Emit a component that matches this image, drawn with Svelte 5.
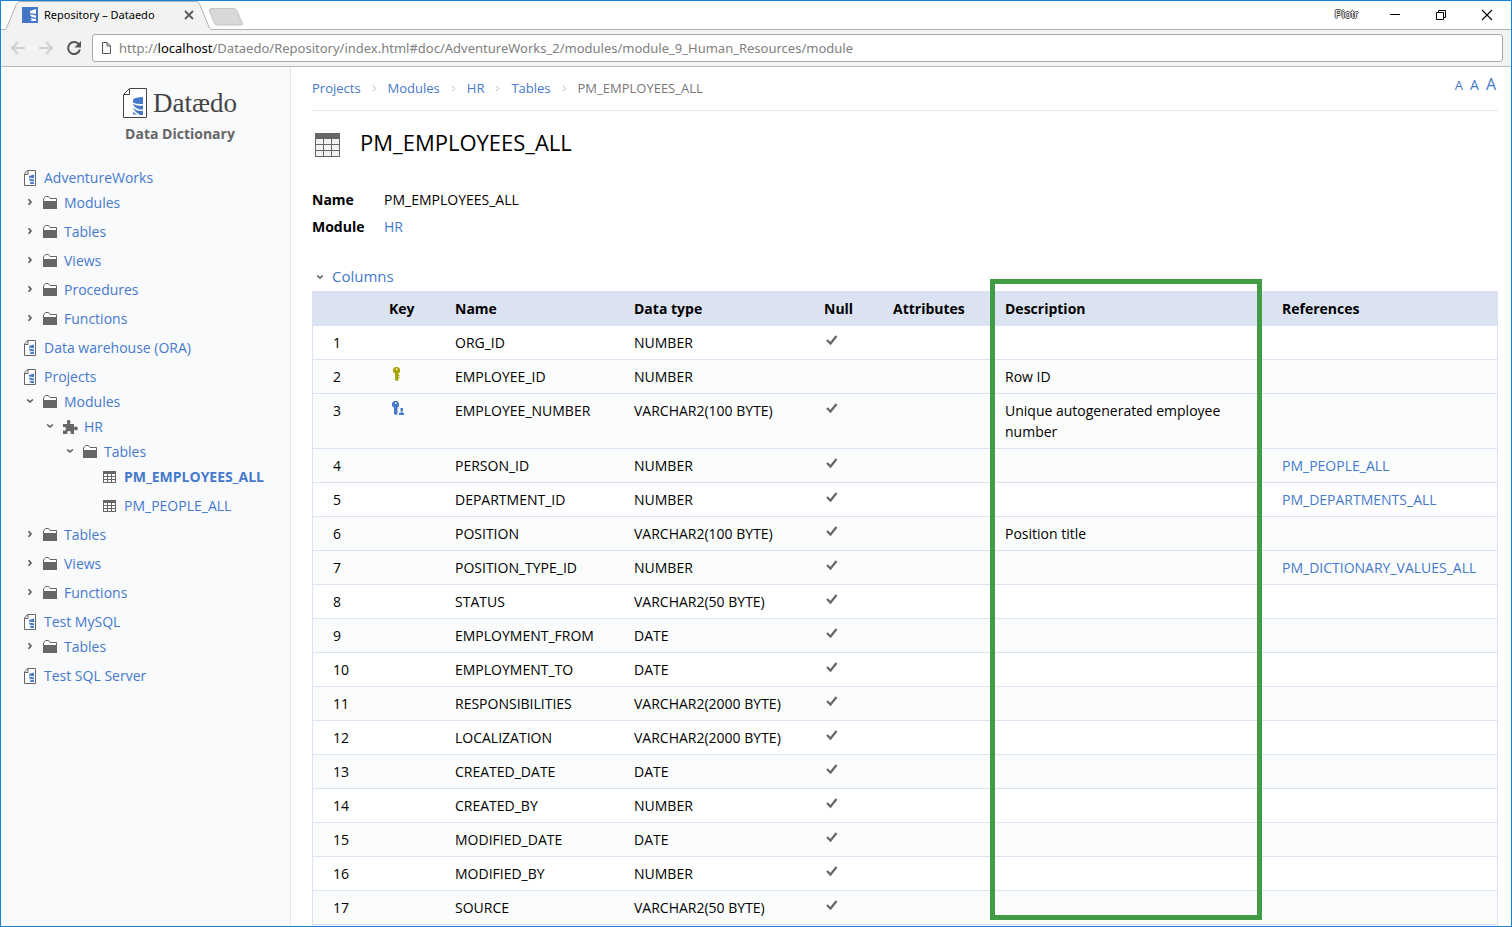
<!-- Dataedo repository viewer -->
<script>
  const url = { scheme: 'http://', host: 'localhost', path: '/Dataedo/Repository/index.html#doc/AdventureWorks_2/modules/module_9_Human_Resources/module' };

  const folder = (label, children) => ({ icon: 'folder', label, children });

  let tree = $state([
    { icon: 'doc', label: 'AdventureWorks', open: true, children: [
      folder('Modules'), folder('Tables'), folder('Views'), folder('Procedures'), folder('Functions')
    ] },
    { icon: 'doc', label: 'Data warehouse (ORA)' },
    { icon: 'doc', label: 'Projects', open: true, children: [
      { icon: 'folder', label: 'Modules', open: true, children: [
        { icon: 'puzzle', label: 'HR', open: true, children: [
          { icon: 'folder', label: 'Tables', open: true, children: [
            { icon: 'table', label: 'PM_EMPLOYEES_ALL', active: true },
            { icon: 'table', label: 'PM_PEOPLE_ALL' }
          ] }
        ] }
      ] },
      folder('Tables'), folder('Views'), folder('Functions')
    ] },
    { icon: 'doc', label: 'Test MySQL', open: true, children: [folder('Tables')] },
    { icon: 'doc', label: 'Test SQL Server' }
  ]);

  const crumbs = ['Projects', 'Modules', 'HR', 'Tables'];

  const columns = [
    { name: 'ORG_ID', type: 'NUMBER', nullable: true },
    { name: 'EMPLOYEE_ID', type: 'NUMBER', key: 'primary', description: 'Row ID' },
    { name: 'EMPLOYEE_NUMBER', type: 'VARCHAR2(100 BYTE)', key: 'unique', nullable: true, description: 'Unique autogenerated employee number' },
    { name: 'PERSON_ID', type: 'NUMBER', nullable: true, ref: 'PM_PEOPLE_ALL' },
    { name: 'DEPARTMENT_ID', type: 'NUMBER', nullable: true, ref: 'PM_DEPARTMENTS_ALL' },
    { name: 'POSITION', type: 'VARCHAR2(100 BYTE)', nullable: true, description: 'Position title' },
    { name: 'POSITION_TYPE_ID', type: 'NUMBER', nullable: true, ref: 'PM_DICTIONARY_VALUES_ALL' },
    { name: 'STATUS', type: 'VARCHAR2(50 BYTE)', nullable: true },
    { name: 'EMPLOYMENT_FROM', type: 'DATE', nullable: true },
    { name: 'EMPLOYMENT_TO', type: 'DATE', nullable: true },
    { name: 'RESPONSIBILITIES', type: 'VARCHAR2(2000 BYTE)', nullable: true },
    { name: 'LOCALIZATION', type: 'VARCHAR2(2000 BYTE)', nullable: true },
    { name: 'CREATED_DATE', type: 'DATE', nullable: true },
    { name: 'CREATED_BY', type: 'NUMBER', nullable: true },
    { name: 'MODIFIED_DATE', type: 'DATE', nullable: true },
    { name: 'MODIFIED_BY', type: 'NUMBER', nullable: true },
    { name: 'SOURCE', type: 'VARCHAR2(50 BYTE)', nullable: true }
  ];

  // row numbers left on a white background
  const plainRows = [1, 5, 8, 10, 12, 14, 16];

  let showColumns = $state(true);
</script>

{#snippet chevron(open)}
  <svg class="chevron" class:open width="8" height="8" viewBox="0 0 8 8">
    <path d="M2.5 1.2L5 4L2.5 6.8" fill="none" stroke="#555" stroke-width="1.6" />
  </svg>
{/snippet}

{#snippet icon(type)}
  {#if type === 'doc'}
    <svg width="12" height="16" viewBox="0 0 12 16">
      <path d="M3.5 .5H11.5V15.5H.5V4z" fill="#fff" stroke="#666" />
      <path d="M.5 4.5H4V.5" fill="none" stroke="#666" />
      <path d="M5 6L10 4.500V8.300L5 7.500zM5 8.500L10 9.500V11.500L5.500 10.500zM5.500 11.500L10 12.300V14H5L7 13z" fill="#4679cc" />
    </svg>
  {:else if type === 'folder'}
    <svg width="14" height="13" viewBox="0 0 14 13">
      <path d="M.5 12V3L2.5 .5H5.5L7 2.500H13.5V12" fill="#fff" stroke="#666" />
      <path d="M0 5H14V13H0z" fill="#666" />
    </svg>
  {:else if type === 'puzzle'}
    <svg width="15" height="14" viewBox="0 0 15 14">
      <path d="M0 4H4.600C3.200 2 4 0 5.700 0S8.200 2 6.800 4H11V7.400C12.500 6 14.800 6.500 14.800 8.500S12.500 11 11 9.600V14H7.500C8.500 12 7.500 11 6 11S3.500 12 4.500 14H0V10.300C2 11.300 3 10 3 8.800S2 6.300 0 7.300z" fill="#666" />
    </svg>
  {:else if type === 'table'}
    <svg width="13" height="12" viewBox="0 0 13 12">
      <path d="M0 0H13V12H0z" fill="#666" />
      <path d="M1 3h3v2H1zM5 3h3v2H5zM9 3h3v2H9zM1 6h3v2H1zM5 6h3v2H5zM9 6h3v2H9zM1 9h3v2H1zM5 9h3v2H5zM9 9h3v2H9z" fill="#fff" />
    </svg>
  {/if}
{/snippet}

{#snippet branch(nodes, root)}
  <ul class:root>
    {#each nodes as node}
      <li>
        <div class="node">
          {#if !root}
            <span class="caret">
              {#if node.icon !== 'table'}
                <button aria-label="Toggle {node.label}" onclick={() => (node.open = !node.open)}>{@render chevron(node.open)}</button>
              {/if}
            </span>
          {/if}
          <a href="#{node.label}" class:active={node.active}>
            <span class="node-icon {node.icon}">{@render icon(node.icon)}</span>{node.label}
          </a>
        </div>
        {#if node.open && node.children}
          {@render branch(node.children, false)}
        {/if}
      </li>
    {/each}
  </ul>
{/snippet}

<div class="window">
  <header class="tabstrip">
    <svg class="tab-shape" width="245" height="29" viewBox="0 0 245 29">
      <path d="M0 28.5H3C5 28.5 5.5 27.5 6 26L15 4C16 1.5 17 .5 19 .5H195C197 .5 198 1.5 199 4L208 26C209 28 210 28.5 212 28.5H245V29H0z" fill="#f2f2f2" />
      <path d="M0 28.5H3C5 28.5 5.5 27.5 6 26L15 4C16 1.5 17 .5 19 .5H195C197 .5 198 1.5 199 4L208 26C209 28 210 28.5 212 28.5H245" fill="none" stroke="#b3b3b3" />
      <path d="M211 7.5H232C234 7.5 235 8 236 10L241 21C242 23 241.5 24 240 24H217C215 24 214 23.5 213 21.5L208.5 10C208 8.5 209 7.5 211 7.5z" fill="#d8d8d8" stroke="#c4c4c4" />
    </svg>
    <div class="tab">
      <svg width="16" height="16" viewBox="0 0 16 16">
        <path d="M0 0h16v16H0z" fill="#4476c6" />
        <path d="M8 4L14 2V7L8 6zM8 7.200L14 8.500V11L9 9.500zM8.500 11L14 12V14H8L10 13z" fill="#fff" />
      </svg>
      <span class="tab-title">Repository – Dataedo</span>
      <button aria-label="Close tab">
        <svg width="10" height="10" viewBox="0 0 10 10"><path d="M1 1l8 8M9 1L1 9" stroke="#5a5a5a" stroke-width="1.8" /></svg>
      </button>
    </div>
    <div class="window-controls">
      <span class="user">Piotr</span>
      <button aria-label="Minimize"><svg width="10" height="10" viewBox="0 0 10 10"><path d="M0 4.5H10" stroke="#000" /></svg></button>
      <button aria-label="Restore"><svg width="10" height="10" viewBox="0 0 10 10"><path d="M.5 2.5H7.5V9.5H.5zM2.5 2.5V.5H9.5V7.5H7.5" fill="none" stroke="#000" /></svg></button>
      <button aria-label="Close"><svg width="10" height="10" viewBox="0 0 10 10"><path d="M0 0L10 10M10 0L0 10" stroke="#000" stroke-width="1.1" /></svg></button>
    </div>
  </header>

  <div class="toolbar">
    <button aria-label="Back" disabled><svg width="14" height="14" viewBox="0 0 14 14"><path d="M14 7H1.5M7 1L1 7L7 13" fill="none" stroke="#d0d0d0" stroke-width="2" /></svg></button>
    <button aria-label="Forward" disabled><svg width="14" height="14" viewBox="0 0 14 14"><path d="M0 7H12.5M7 1L13 7L7 13" fill="none" stroke="#d0d0d0" stroke-width="2" /></svg></button>
    <button aria-label="Reload"><svg width="14" height="14" viewBox="0 0 14 14"><path d="M12 3.600A6 6 0 1 0 12.900 8.500" fill="none" stroke="#555" stroke-width="2" /><path d="M14 0V6.500H7.500z" fill="#555" /></svg></button>
    <div class="omnibox">
      <svg width="9" height="12" viewBox="0 0 9 12"><path d="M.5 .5H5L8.5 4V11.5H.5zM5 .5V4H8.5" fill="none" stroke="#555" /></svg>
      <span>{url.scheme}<b>{url.host}</b>{url.path}</span>
    </div>
  </div>

  <div class="page">
    <nav class="sidebar">
      <div class="brand">
        <div class="logo">
          <svg width="24" height="30" viewBox="0 0 24 30">
            <path d="M6.5 .5H23.5V29.5H.5V6.5z" fill="#fff" stroke="#444" />
            <path d="M1 6.5H6.5V1" fill="none" stroke="#444" />
            <path d="M10 11.5Q12 9 20 9V16Q13 16.500 10 14.500zM10 16Q14 18.500 20 17.500V21.500Q13 22 10 16.500zM10 20Q14 23.500 20 23V27H17Q13 25 10 20.500zM10 24L14 26.500H10z" fill="#4679cc" />
          </svg>
          <span>Datædo</span>
        </div>
        <strong>Data Dictionary</strong>
      </div>
      {@render branch(tree, true)}
    </nav>

    <main>
      <div class="topline">
        <nav class="crumbs" aria-label="Breadcrumb">
          {#each crumbs as crumb}
            <a href="#{crumb}">{crumb}</a>
            <svg width="3" height="7" viewBox="0 0 3 7"><path d="M0 .8L2.700 3.500L0 6.200" fill="none" stroke="#b5b5b5" /></svg>
          {/each}
          <span>PM_EMPLOYEES_ALL</span>
        </nav>
        <div class="text-size">
          <button class="small" aria-label="Small text">A</button>
          <button class="medium" aria-label="Medium text">A</button>
          <button class="large" aria-label="Large text">A</button>
        </div>
      </div>

      <div class="heading">
        <svg width="25" height="24" viewBox="0 0 25 24">
          <path d="M0 0H25V24H0z" fill="#666" />
          <path d="M1 6h7v5H1zM9 6h7v5H9zM17 6h7v5H17zM1 12h7v5H1zM9 12h7v5H9zM17 12h7v5H17zM1 18h7v5H1zM9 18h7v5H9zM17 18h7v5H17z" fill="#f1f1f4" />
        </svg>
        <h1>PM_EMPLOYEES_ALL</h1>
      </div>

      <dl>
        <dt>Name</dt>
        <dd>PM_EMPLOYEES_ALL</dd>
        <dt>Module</dt>
        <dd><a href="#HR">HR</a></dd>
      </dl>

      <button class="section-toggle" onclick={() => (showColumns = !showColumns)}>
        {@render chevron(showColumns)}Columns
      </button>

      {#if showColumns}
        <div class="table-wrap">
          <table>
            <thead>
              <tr>
                <th class="c-num"></th>
                <th class="c-key">Key</th>
                <th class="c-name">Name</th>
                <th class="c-type">Data type</th>
                <th class="c-null">Null</th>
                <th class="c-attr">Attributes</th>
                <th>Description</th>
                <th class="c-ref">References</th>
              </tr>
            </thead>
            <tbody>
              {#each columns as column, i}
                <tr class:shaded={!plainRows.includes(i + 1)}>
                  <td class="c-num">{i + 1}</td>
                  <td>
                    {#if column.key === 'primary'}
                      <svg class="mark" width="14" height="14" viewBox="0 0 14 14">
                        <path fill-rule="evenodd" d="M6 0H9L11 2V5L9.500 6.500V8H10.500V9H9.500V10H10.500V11H9.500V13L8 14L6 13V6.500L4 5V2zM7 1.500V3H8.500V1.500z" fill="#a8a500" />
                      </svg>
                    {:else if column.key === 'unique'}
                      <svg class="mark" width="14" height="14" viewBox="0 0 14 14">
                        <path fill-rule="evenodd" d="M5 0H8L10 2V5L8.500 6.500V13L7 14L5 13V6.500L3 5V2zM6 1.500V3H7.500V1.500z" fill="#4679cc" />
                        <path d="M11.500 7H14V10H13.200V11.500L15 12V14H10V12L12.200 11.500V10H11.500z" fill="#4679cc" />
                      </svg>
                    {/if}
                  </td>
                  <td>{column.name}</td>
                  <td>{column.type}</td>
                  <td>
                    {#if column.nullable}
                      <svg class="mark" width="14" height="14" viewBox="0 0 14 14">
                        <path d="M3 7L6.500 10.500L12.500 3" fill="none" stroke="#666" stroke-width="2.2" />
                      </svg>
                    {/if}
                  </td>
                  <td></td>
                  <td>{column.description ?? ''}</td>
                  <td>{#if column.ref}<a href="#{column.ref}">{column.ref}</a>{/if}</td>
                </tr>
              {/each}
            </tbody>
          </table>
          <div class="highlight"></div>
        </div>
      {/if}
    </main>
  </div>
</div>

<style>
  :global(body) {
    margin: 0;
  }
  .window {
    display: flex;
    flex-direction: column;
    height: 100vh;
    box-sizing: border-box;
    overflow: hidden;
    border: 1px solid #1883d7;
    background: #fff;
    color: #000;
    font: 14px/21px "Open Sans", sans-serif;
  }
  a {
    color: #4679cc;
    text-decoration: none;
  }
  button {
    padding: 0;
    border: 0;
    background: none;
    font: inherit;
    color: inherit;
    cursor: pointer;
  }
  svg {
    display: block;
    flex: none;
    overflow: visible;
  }

  /* browser chrome */
  .tabstrip {
    position: relative;
    display: flex;
    flex: none;
    justify-content: space-between;
    height: 28px;
    border-bottom: 1px solid #b3b3b3;
  }
  .tab-shape {
    position: absolute;
    left: 0;
    top: 0;
  }
  .tab {
    position: relative;
    display: flex;
    align-items: center;
    width: 172px;
    padding-left: 21px;
    font: 11px/16px "Noto Sans", sans-serif;
  }
  .tab-title {
    flex: 1;
    margin-left: 6px;
    white-space: nowrap;
  }
  .window-controls {
    display: flex;
    align-items: center;
    gap: 36px;
    padding-right: 19px;
  }
  .user {
    margin-right: -4px;
    color: #fff;
    font: 11px/14px Roboto, sans-serif;
    text-shadow: 1px 0 #444, -1px 0 #444, 0 1px #444, 0 -1px #444;
  }
  .toolbar {
    display: flex;
    flex: none;
    align-items: center;
    gap: 14px;
    height: 36px;
    padding: 0 8px 0 10px;
    border-bottom: 1px solid #b9b9b9;
    background: #f2f2f2;
  }
  .omnibox {
    display: flex;
    flex: 1;
    align-items: center;
    gap: 8px;
    height: 26px;
    margin-left: -3px;
    padding-left: 9px;
    border: 1px solid #a9a9a9;
    border-radius: 3px;
    background: #fff;
    color: #808080;
    font: 13px/20px "Noto Sans", sans-serif;
    white-space: nowrap;
    overflow: hidden;
  }
  .omnibox b {
    font-weight: 400;
    color: #000;
  }

  /* navigation tree */
  .page {
    display: flex;
    flex: 1;
    min-height: 0;
  }
  .sidebar {
    flex: none;
    width: 289px;
    border-right: 1px solid #e6e8ec;
    background: #f9fafc;
  }
  .brand {
    display: flex;
    flex-direction: column;
    align-items: center;
    padding: 21px 0 23px 69px;
    color: #666;
  }
  .logo {
    display: flex;
    align-items: center;
    gap: 6px;
    height: 30px;
    margin-bottom: 5px;
    color: #444;
    font: 27px/30px "Liberation Serif", serif;
  }
  ul {
    margin: 4px 0 0;
    padding: 0 0 0 20px;
    list-style: none;
  }
  ul.root {
    margin: 0;
    padding-left: 19px;
  }
  .root > li > :global(ul) {
    padding-left: 0;
  }
  li {
    margin-bottom: 8px;
  }
  .node {
    display: flex;
    white-space: nowrap;
  }
  .caret {
    display: flex;
    align-items: center;
    justify-content: center;
    width: 20px;
    padding-bottom: 2px;
  }
  .chevron.open {
    transform: rotate(90deg);
  }
  .node a {
    display: flex;
    align-items: center;
  }
  .node a.active {
    font-weight: 700;
  }
  .node-icon {
    width: 21px;
    padding-left: 3px;
  }
  .node-icon.doc {
    width: 20px;
    padding-left: 4px;
  }

  /* document */
  main {
    flex: 1;
    min-width: 0;
    padding: 0 13px 0 21px;
  }
  .topline {
    display: flex;
    justify-content: space-between;
    height: 43px;
    border-bottom: 1px solid #e8e8e8;
  }
  .crumbs {
    display: flex;
    align-items: center;
    gap: 12px;
    font-size: 13px;
    color: #777;
  }
  .text-size {
    display: flex;
    align-items: baseline;
    gap: 7px;
    padding: 7px 2px 0 0;
    color: #4679cc;
  }
  .small { font-size: 13px; }
  .medium { font-size: 14px; }
  .large { font-size: 16px; }
  .heading {
    display: flex;
    align-items: center;
    gap: 20px;
    padding: 15px 0 0 3px;
  }
  h1 {
    margin: 0 0 5px;
    font-size: 22px;
    line-height: 33px;
    font-weight: 400;
  }
  dl {
    display: grid;
    grid-template-columns: 72px 1fr;
    row-gap: 6px;
    margin: 25px 0 29px;
  }
  dt {
    font-weight: 700;
  }
  dd {
    margin: 0;
  }
  .section-toggle {
    display: flex;
    align-items: center;
    gap: 8px;
    padding-left: 4px;
    color: #4679cc;
    font-size: 15px;
  }
  .table-wrap {
    position: relative;
    margin-top: 4px;
  }
  table {
    width: 100%;
    table-layout: fixed;
    border-collapse: collapse;
    border: 1px solid #dbe2f1;
  }
  th, td {
    padding: 6px 10px;
    border-bottom: 1px solid #dbe2f1;
    text-align: left;
    vertical-align: top;
  }
  th {
    background: #dbe2f1;
    font-weight: 700;
  }
  .shaded {
    background: #fbfdfd;
  }
  .mark {
    margin-top: 1px;
  }
  .c-num { width: 36px; padding-left: 20px; }
  .c-key { width: 46px; }
  .c-name { width: 159px; }
  .c-type { width: 170px; }
  .c-null { width: 49px; }
  .c-attr { width: 92px; }
  .c-ref { width: 205px; }
  /* frame drawn around the Description column */
  .highlight {
    position: absolute;
    top: -12px;
    bottom: 5px;
    left: 678px;
    right: 236px;
    border: 5px solid #429c46;
    pointer-events: none;
  }
</style>
